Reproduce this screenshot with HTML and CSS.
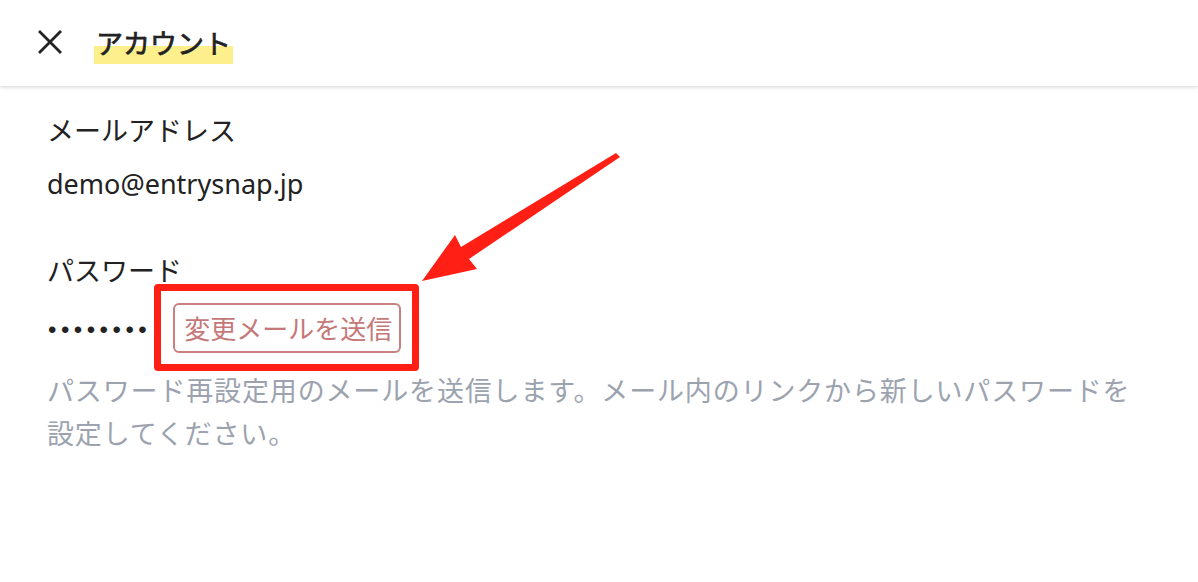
FILE: index.html
```html
<!DOCTYPE html>
<html lang="ja">
<head>
<meta charset="utf-8">
<title>アカウント</title>
<link rel="stylesheet" href="styles.css">
</head>
<body>
<header class="topbar">
  <button class="close-btn" aria-label="閉じる">
    <svg width="24" height="24" viewBox="0 0 24 24"><path d="M2 2 L22 22 M22 2 L2 22" stroke="#222" stroke-width="2.8" stroke-linecap="square" fill="none"/></svg>
  </button>
  <h1 class="title"><span class="title-mark">アカウント</span></h1>
</header>
<main class="content">
  <section class="field">
    <div class="label">メールアドレス</div>
    <div class="value">demo@entrysnap.jp</div>
  </section>
  <section class="field field-password">
    <div class="label">パスワード</div>
    <div class="password-row">
      <span class="dots">••••••••</span>
      <button class="send-btn">変更メールを送信</button>
    </div>
    <p class="note">パスワード再設定用のメールを送信します。メール内のリンクから新しいパスワードを設定してください。</p>
  </section>
</main>
<div class="annot-box"></div>
<svg class="annot-arrow" width="1198" height="582" viewBox="0 0 1198 582">
  <polygon points="616,153 620,157 469,259 477,269 422,281 455,235 461,247" fill="#ff1f14"/>
</svg>
</body>
</html>
```
FILE: styles.css
```css
* { box-sizing: border-box; }
html, body { margin: 0; padding: 0; background: #fff; }
body {
  width: 1198px;
  height: 582px;
  overflow: hidden;
  position: relative;
  font-family: "Noto Sans", "Noto Sans CJK JP", sans-serif;
  color: #222;
}
.topbar {
  height: 86px;
  display: flex;
  align-items: flex-start;
  padding: 28px 0 0 38px;
  box-shadow: 0 1px 4px rgba(0,0,0,0.18);
  position: relative;
  z-index: 1;
  background: #fff;
}
.close-btn {
  border: 0;
  background: none;
  padding: 0;
  margin: 2px 0 0 0;
  width: 24px;
  height: 24px;
  display: block;
}
.close-btn svg { display: block; }
.title {
  margin: 0 0 0 32px;
  font-size: 27px;
  font-weight: 400;
  line-height: 1;
}
.title-mark {
  display: inline-block;
  padding: 1px 2px 8px;
  background: linear-gradient(to bottom, transparent 51%, #fdf08c 51%);
  font-family: "Noto Sans CJK JP", sans-serif;
  -webkit-text-stroke: 0.7px #222;
}
.content {
  padding: 25px 47px 0;
}
.label, .value {
  font-size: 27px;
  line-height: 40px;
}
.value { margin-top: 13px; }
.field-password { margin-top: 47px; }
.password-row {
  display: flex;
  align-items: center;
  margin-top: 12px;
}
.dots {
  font-family: "Liberation Sans", sans-serif;
  font-size: 24px;
  letter-spacing: 4.5px;
  color: #222;
  margin: 4px 22px 0 1px;
}
.send-btn {
  height: 50px;
  padding: 0 7px 0 9px;
  border: 2px solid #c98080;
  border-radius: 6px;
  background: #fff;
  color: #c47878;
  font-family: "Noto Sans CJK JP", sans-serif;
  font-size: 26px;
  line-height: 1;
}
.note {
  margin: 15px 0 0;
  font-size: 27px;
  line-height: 43px;
  color: #9ca3af;
  letter-spacing: 0.85px;
  font-family: "Noto Sans CJK JP", sans-serif;
}
.annot-box {
  position: absolute;
  left: 154px;
  top: 284px;
  width: 265px;
  height: 87px;
  border: 7px solid #ff1f14;
  border-radius: 4px;
  z-index: 2;
}
.annot-arrow {
  position: absolute;
  left: 0;
  top: 0;
  z-index: 2;
  pointer-events: none;
}
```
